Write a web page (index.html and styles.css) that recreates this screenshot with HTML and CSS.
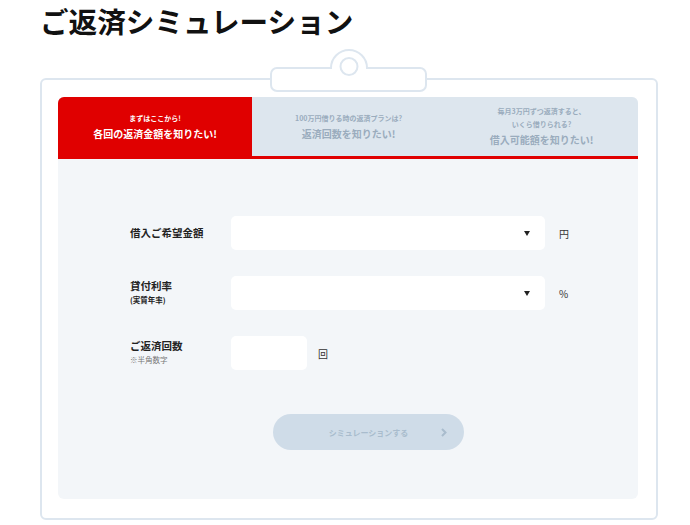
FILE: index.html
```html
<!DOCTYPE html>
<html lang="ja">
<head>
  <meta charset="UTF-8">
  <meta name="viewport" content="width=device-width, initial-scale=1.0">
  <title>ご返済シミュレーション</title>
  <link rel="stylesheet" href="styles.css">
</head>
<body>

<h1 class="title">ご返済シミュレーション</h1>

<div class="card">
  <svg class="clip" width="162" height="46" viewBox="0 0 162 46">
    <path d="M9 20 H63 A18 18 0 0 1 99 20 H152 A6 6 0 0 1 158 26 V37 A6 6 0 0 1 152 43 H9 A6 6 0 0 1 3 37 V26 A6 6 0 0 1 9 20 Z" fill="#fff" stroke="#dde6ef" stroke-width="2"/>
    <circle cx="81" cy="18.5" r="8.5" fill="#fff" stroke="#dde6ef" stroke-width="2"/>
  </svg>

  <div class="panel">
    <div class="tabs">
      <div class="tab active">
        <p class="tab-sub">まずはここから!</p>
        <p class="tab-main">各回の返済金額を知りたい!</p>
      </div>
      <div class="tab">
        <p class="tab-sub">100万円借りる時の返済プランは?</p>
        <p class="tab-main">返済回数を知りたい!</p>
      </div>
      <div class="tab">
        <p class="tab-sub">毎月3万円ずつ返済すると、</p>
        <p class="tab-sub">いくら借りられる?</p>
        <p class="tab-main">借入可能額を知りたい!</p>
      </div>
    </div>

    <div class="form">
      <div class="row">
        <div class="label">借入ご希望金額</div>
        <div class="select"><span class="arrow"></span></div>
        <span class="unit">円</span>
      </div>
      <div class="row">
        <div class="label">貸付利率<small>(実質年率)</small></div>
        <div class="select"><span class="arrow"></span></div>
        <span class="unit">%</span>
      </div>
      <div class="row">
        <div class="label">ご返済回数<small class="note">※半角数字</small></div>
        <div class="input"></div>
        <span class="unit unit-short">回</span>
      </div>

      <button class="submit">シミュレーションする
        <svg class="chev" width="6" height="9" viewBox="0 0 6 9"><path d="M1 1 L4.5 4.5 L1 8" fill="none" stroke="#a9bccd" stroke-width="2"/></svg>
      </button>
    </div>
  </div>
</div>

</body>
</html>
```

FILE: styles.css
```css
* {
  margin: 0;
  padding: 0;
  box-sizing: border-box;
}

body {
  background-color: #fff;
  font-family: "Noto Sans CJK JP", "Noto Sans", sans-serif;
  color: #222;
}

.title {
  font-size: 28.6px;
  line-height: 42px;
  font-weight: bold;
  padding-left: 40px;
  color: #111;
}

.card {
  position: relative;
  width: 618px;
  margin: 36px 0 0 40px;
  border: 2px solid #dde6ef;
  border-radius: 6px;
  padding: 17px 18px 19px 16px;
}

.clip {
  position: absolute;
  left: 226px;
  top: -32px;
}

.panel {
  background-color: #f3f6f9;
  border-radius: 6px;
}

.tabs {
  display: grid;
  grid-template-columns: 194px 193px 1fr;
  height: 62px;
  background-color: #dde6ee;
  border-bottom: 3px solid #e00000;
  border-radius: 6px 6px 0 0;
  overflow: hidden;
}

.tab {
  display: flex;
  flex-direction: column;
  align-items: center;
  justify-content: center;
  color: #9aacbd;
  font-weight: bold;
  text-align: center;
}

.tab.active {
  background-color: #e00000;
  color: #fff;
}

.tab-sub {
  font-size: 7px;
  line-height: 13px;
}

.tab-main {
  font-size: 10px;
  line-height: 16px;
  margin-top: 1px;
}

.form {
  padding: 57px 0 49px 72px;
  display: flex;
  flex-direction: column;
  gap: 26px;
}

.row {
  display: flex;
  align-items: center;
  height: 34px;
}

.label {
  width: 101px;
  font-size: 10.5px;
  font-weight: bold;
  display: flex;
  flex-direction: column;
  line-height: 14px;
}

.label small {
  font-size: 7.5px;
  line-height: 14px;
}

.label .note {
  font-weight: normal;
  color: #777;
}

.select, .input {
  height: 34px;
  background-color: #fff;
  border-radius: 5px;
}

.select {
  width: 314px;
  display: flex;
  align-items: center;
  justify-content: flex-end;
  padding-right: 15px;
}

.input {
  width: 76px;
}

.arrow {
  width: 0;
  height: 0;
  border-left: 3.5px solid transparent;
  border-right: 3.5px solid transparent;
  border-top: 5px solid #222;
}

.unit {
  margin-left: 14px;
  font-size: 10px;
  color: #333;
}

.unit-short {
  margin-left: 11px;
}

.submit {
  position: relative;
  margin: 18px 0 0 143px;
  width: 191px;
  height: 36px;
  border: none;
  border-radius: 18px;
  background-color: #cfdce8;
  color: #a9bccd;
  font-family: "Noto Sans CJK JP", "Noto Sans", sans-serif;
  font-size: 8px;
  font-weight: bold;
}

.chev {
  position: absolute;
  right: 17px;
  top: 14px;
}
```
